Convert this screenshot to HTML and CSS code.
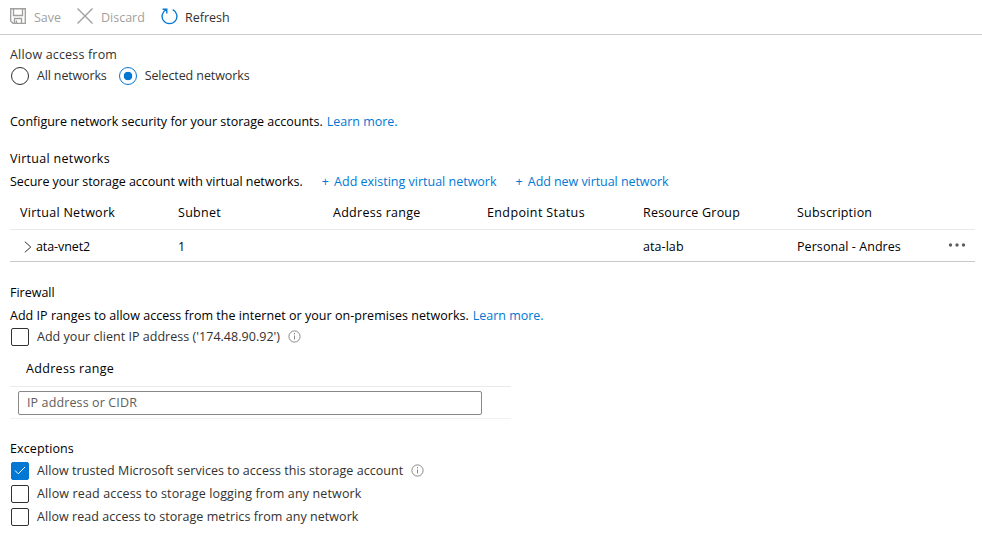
FILE: index.html
```
<!DOCTYPE html>
<html lang="en">
<head>
<meta charset="utf-8">
<title>Networking</title>
<link rel="stylesheet" href="styles.css">
</head>
<body>
<header class="toolbar">
  <button class="command save" disabled><svg width="16" height="16" viewBox="0 0 16 16"><path d="M.7.7h14.6v14.6H3L.7 13zM3.5 1v6.5h9V1M4.5 15v-4.5h7V15M6.5 12.5V15"/></svg><span>Save</span></button>
  <button class="command discard" disabled><svg width="16" height="16" viewBox="0 0 16 16"><path d="M.5.5l15 15M15.5.5l-15 15"/></svg><span>Discard</span></button>
  <button class="command refresh"><svg width="17" height="17" viewBox="0 0 17 17"><path d="M11.7 1.6A7.4 7.4 0 1 1 5.3 1.6M1.6 1.2h4.2v4.3"/></svg><span>Refresh</span></button>
</header>
<main class="content">
  <section class="access">
    <h2 class="t-access">Allow access from</h2>
    <div class="radios">
      <label class="option"><span class="radio"></span><span class="t-all">All networks</span></label>
      <label class="option"><span class="radio selected"></span><span class="t-selected">Selected networks</span></label>
    </div>
  </section>
  <p class="intro"><span>Configure network security for your storage accounts.</span><a class="t-learn">Learn more.</a></p>
  <section class="networks">
    <h2 class="t-vnets">Virtual networks</h2>
    <p class="actions"><span class="t-secure">Secure your storage account with virtual networks.</span><a><span class="plus">+</span> Add existing virtual network</a><a class="t-new"><span class="plus">+</span> Add new virtual network</a></p>
    <div class="grid head"><span>Virtual Network</span><span>Subnet</span><span>Address range</span><span class="t-status">Endpoint Status</span><span class="t-group">Resource Group</span><span class="t-group">Subscription</span></div>
    <div class="grid row"><span class="name"><svg width="8" height="12" viewBox="0 0 8 12"><path d="M.8.7L6.8 6l-6 5.3"/></svg><span class="t-name">ata-vnet2</span></span><span>1</span><span></span><span></span><span>ata-lab</span><span>Personal - Andres</span><svg class="more" width="18" height="4" viewBox="0 0 18 4"><circle cx="2.5" cy="2" r="1.7"/><circle cx="9" cy="2" r="1.7"/><circle cx="15.5" cy="2" r="1.7"/></svg></div>
  </section>
  <section class="firewall">
    <h2>Firewall</h2>
    <p class="ranges"><span class="t-ranges">Add IP ranges to allow access from the internet or your on-premises networks.</span><a class="t-learn">Learn more.</a></p>
    <label class="option check client"><span class="box"></span><span class="t-client">Add your client IP address ('174.48.90.92')</span><svg class="info" width="13" height="13" viewBox="0 0 13 13"><circle cx="6.5" cy="6.5" r="5.6"/><path d="M6.5 5.5v4M6.5 3v1.4"/></svg></label>
    <div class="range-head">Address range</div>
    <div class="range-row"><input placeholder="IP address or CIDR"></div>
  </section>
  <section class="exceptions">
    <h2 class="t-exceptions">Exceptions</h2>
    <label class="option check"><span class="box checked"><svg width="12" height="9" viewBox="0 0 12 9"><path d="M1 4.5l3.3 3.3L11 1"/></svg></span><span class="t-trusted">Allow trusted Microsoft services to access this storage account</span><svg class="info" width="13" height="13" viewBox="0 0 13 13"><circle cx="6.5" cy="6.5" r="5.6"/><path d="M6.5 5.5v4M6.5 3v1.4"/></svg></label>
    <label class="option check"><span class="box"></span><span class="t-logging">Allow read access to storage logging from any network</span></label>
    <label class="option check"><span class="box"></span><span class="t-metrics">Allow read access to storage metrics from any network</span></label>
  </section>
</main>
</body>
</html>
```
FILE: styles.css
```
* { box-sizing: border-box; }
body { margin: 0; background: #fff; color: #000; font: 12.5px/20px "Open Sans", "Noto Sans", sans-serif; }
h2, p { margin: 0; font-size: inherit; font-weight: 400; white-space: nowrap; }
svg { display: block; flex: none; fill: none; stroke: currentColor; }
a { color: #0078d4; }
span { white-space: nowrap; }

.toolbar { display: flex; height: 35px; padding: 0 10px 2px; border-bottom: 1px solid #ccc; }
.command { display: flex; align-items: center; padding: 0; border: 0; background: none; color: #323130; font: inherit; }
.command:disabled { color: #a19f9d; }
.command svg { margin-right: 8px; stroke-width: 1.35; }
.command span { padding-top: 3px; }
.save { width: 67px; }
.discard { width: 84px; }
.refresh svg { margin-right: 7px; color: #0078d4; }

.content { padding: 10px 7px 0 10px; }
.access { color: #323130; }
.radios { display: flex; gap: 11px; height: 22px; }
.radios .option { padding-bottom: 1px; }
.option { display: flex; align-items: center; color: #323130; }
.radio { width: 18px; height: 18px; margin: 0 8px 0 1px; border: 1px solid #323130; border-radius: 50%; }
.selected { border-color: #0078d4; background: radial-gradient(circle, #0078d4 4px, #fff 4.6px); }
.intro { display: flex; gap: 4px; margin-top: 25px; }

.networks { margin-top: 17px; }
.actions { display: flex; gap: 19px; margin-top: 3px; }
.plus { margin-right: 2px; }
.grid { display: grid; grid-template-columns: 158px 155px 154px 156px 154px 151px 18px; align-items: center; padding-left: 10px; }
.head { height: 38px; padding-top: 4px; border-bottom: 1px solid #eaeaea; letter-spacing: .28px; }
.row { height: 32px; padding-top: 2px; border-bottom: 1px solid #c8c8c8; letter-spacing: .07px; }
.name { display: flex; align-items: center; gap: 4px; padding-left: 4px; }
.name svg { color: #323130; }
.more { margin-top: -4px; fill: #605e5c; stroke: none; }

.firewall { margin-top: 21px; }
.ranges { display: flex; gap: 4px; margin-top: 3px; }
.check { height: 23px; }
.client { height: 22px; }
.box { display: grid; place-items: center; width: 18px; height: 18px; margin: 0 8px 0 1px; border: 1px solid #323130; border-radius: 2px; }
.checked { border-color: #0078d4; background: #0078d4; color: #fff; }
.info { margin: -1px 0 0 8px; color: #8a8886; }
.range-head { width: 501px; height: 39px; padding: 11px 0 0 16px; border-bottom: 1px solid #eaeaea; letter-spacing: .32px; }
.range-row { width: 501px; height: 32px; padding: 4px 8px; border-bottom: 1px solid #f1f1f1; }
input { display: block; width: 464px; height: 24px; padding: 0 8px 1px; border: 1px solid #8a8886; border-radius: 2px; font: inherit; letter-spacing: .12px; }
input::placeholder { color: #605e5c; opacity: 1; }
.exceptions { margin-top: 20px; }

.t-access { letter-spacing: .17px; }
.t-all { letter-spacing: -.15px; }
.t-selected { letter-spacing: -.08px; }
.t-learn { letter-spacing: -.02px; }
.t-vnets { letter-spacing: .3px; }
.t-secure { letter-spacing: -.04px; }
.t-new { letter-spacing: -.06px; }
.t-status { letter-spacing: .38px; }
.t-group { letter-spacing: .2px; }
.t-name { letter-spacing: -.08px; }
.t-ranges { letter-spacing: .035px; }
.t-client { letter-spacing: .03px; }
.t-exceptions { letter-spacing: .1px; }
.t-trusted { letter-spacing: .062px; }
.t-logging { letter-spacing: .145px; }
.t-metrics { letter-spacing: .06px; }
```
